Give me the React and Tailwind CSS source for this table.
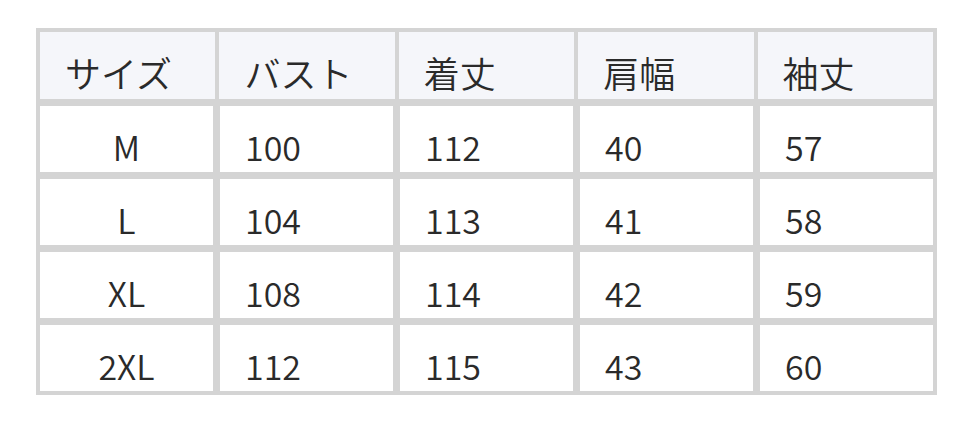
import React from 'react';

const headers = ['サイズ', 'バスト', '着丈', '肩幅', '袖丈'];

const rows = [
    ['M', '100', '112', '40', '57'],
    ['L', '104', '113', '41', '58'],
    ['XL', '108', '114', '42', '59'],
    ['2XL', '112', '115', '43', '60'],
];

const App = () => {
    return (
        <div
            className="w-[972px] h-[422px] bg-white pt-[28px] pl-[36px] text-[#2a2a2a] font-[350]"
            style={{ fontFamily: '"Noto Sans CJK JP", "Noto Sans", sans-serif' }}
        >
            <div className="w-[901px] bg-[#d4d4d4] p-[4px]">
                {/* header row */}
                <div className="grid grid-cols-5 gap-x-[4px]">
                    {headers.map((h) => (
                        <div key={h} className="h-[67px] bg-[#f5f6fa] flex items-end pl-[25px] text-[36px] leading-normal">
                            {h}
                        </div>
                    ))}
                </div>

                {/* body rows */}
                <div className="grid grid-cols-5 gap-[7px] mt-[7px]">
                    {rows.map((row) =>
                        row.map((cell, i) => (
                            <div
                                key={row[0] + i}
                                className={
                                    i === 0
                                        ? 'h-[66px] bg-white flex items-end justify-center text-[34px] leading-normal'
                                        : 'h-[66px] bg-white flex items-end pl-[25px] text-[34px] leading-normal'
                                }
                            >
                                {cell}
                            </div>
                        ))
                    )}
                </div>
            </div>
        </div>
    );
};

export default App;
